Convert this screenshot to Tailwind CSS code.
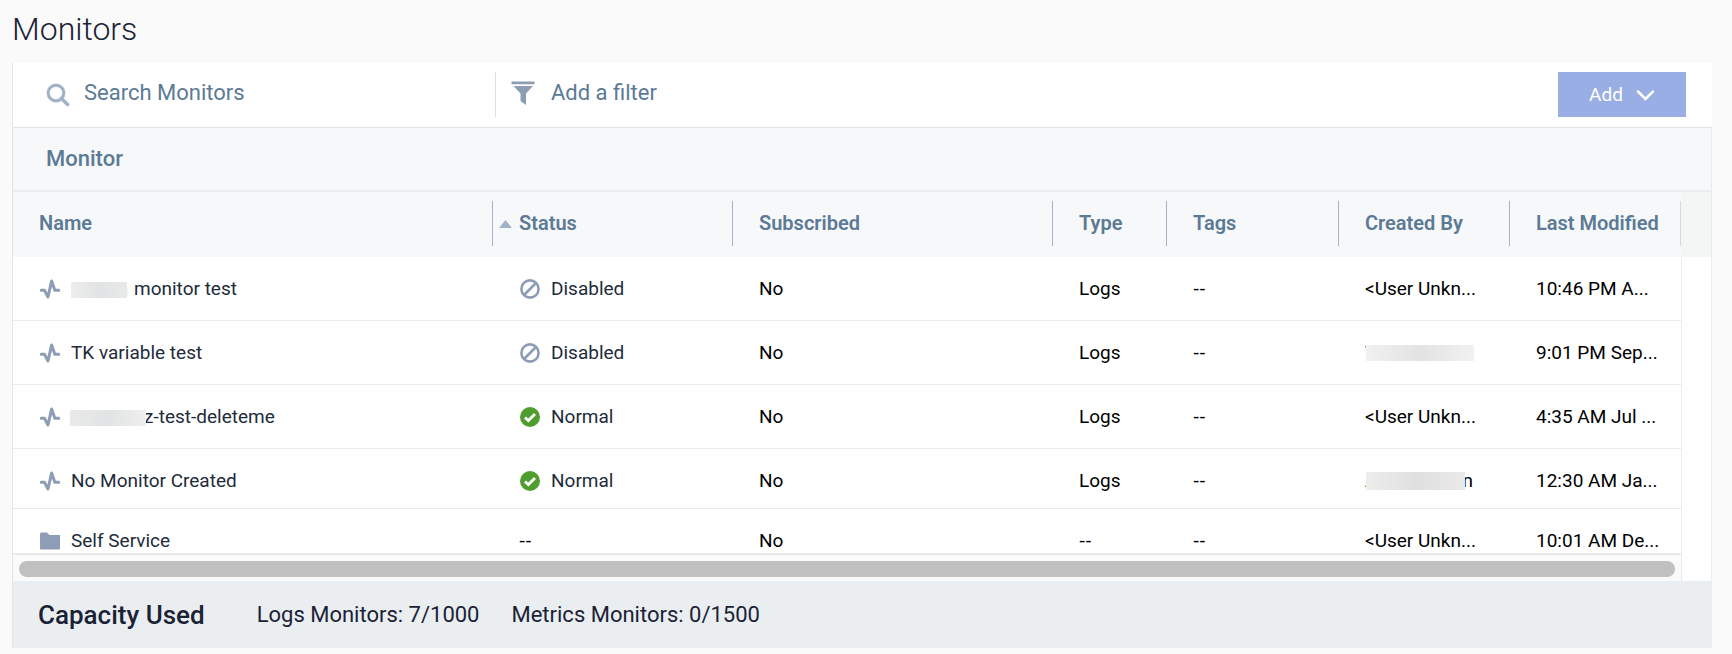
<!DOCTYPE html>
<html lang="en">
<head>
<meta charset="utf-8">
<meta name="viewport" content="width=device-width, initial-scale=1">
<title>Monitors</title>
<script src="https://cdn.jsdelivr.net/npm/@tailwindcss/browser@4"></script>
</head>
<body class="min-h-screen bg-[#fafafa] font-[Roboto,'Liberation_Sans',sans-serif] text-[19px] leading-[22px] text-[#222b3a]">
<svg class="hidden" aria-hidden="true">
  <symbol id="pulse" viewBox="0 0 20 20"><path d="M1.300 11.300H4.400L8 18L11.600 2L14.800 11.300H18.700" fill="none" stroke="#8c9db5" stroke-width="3" stroke-linejoin="round" stroke-linecap="round"/></symbol>
  <symbol id="disabled" viewBox="0 0 20 20"><circle cx="10" cy="10" r="8.600" fill="none" stroke="#8c9db5" stroke-width="2.600"/><path d="M4.500 15.500L15.500 4.500" stroke="#8c9db5" stroke-width="2.600"/></symbol>
  <symbol id="normal" viewBox="0 0 20 20"><circle cx="10" cy="10" r="10" fill="#4f9e2e"/><path d="M5 10.400L8.400 13.600L15 7" fill="none" stroke="#fff" stroke-width="2.800"/></symbol>
  <symbol id="folder" viewBox="0 0 20 20"><path d="M0 3Q0 1.500 1.500 1.500H7L9.500 4H20V17.500Q20 18.500 19 18.500H1Q0 18.500 0 17.500Z" fill="#8c9db5"/></symbol>
</svg>
<main class="pl-3 pr-5">
  <h1 class="h-[63px] pt-2 text-[32px] leading-[42px] font-light text-[#1b2235]">Monitors</h1>

  <section class="border-l border-[#e2e5e9]">
    <div class="flex h-[65px] items-center border-b border-[#dfe4e8] bg-white pr-[26px] pb-px text-[22px]">
      <label class="flex w-[482px] shrink-0 items-center gap-[14px] pl-[33px]">
        <svg class="size-6 shrink-0" viewBox="0 0 24 24" aria-hidden="true"><circle cx="10" cy="10" r="7.800" fill="none" stroke="#a2b3c8" stroke-width="3.200"/><path d="M15.500 15.500L21.500 21.500" stroke="#a2b3c8" stroke-width="3.600" stroke-linecap="round"/></svg>
        <input type="text" aria-label="Search Monitors" placeholder="Search Monitors" class="mb-1 w-full bg-transparent outline-none placeholder:text-[#5b7a95]">
      </label>
      <label class="flex h-[45px] grow items-center gap-4 border-l border-[#dcdfe8] pb-1 pl-[15px]">
        <svg class="size-6 shrink-0" viewBox="0 0 24 24" aria-hidden="true"><path d="M0.500 0.500H23.500V3.300H0.500ZM2.500 5H22L15 12.500V24L9.500 20V12.500Z" fill="#8c9db5"/></svg>
        <input type="text" aria-label="Add a filter" placeholder="Add a filter" class="w-full bg-transparent outline-none placeholder:text-[#5b7a95]">
      </label>
      <button type="button" class="flex h-[45px] w-32 shrink-0 items-center justify-center gap-3 bg-[#9aaee6] text-[19px] text-white">Add
        <svg class="size-5" viewBox="0 0 20 20" aria-hidden="true"><path d="M3 6.500L10.500 14L18 6.500" fill="none" stroke="#fff" stroke-width="2.500" stroke-linecap="round"/></svg>
      </button>
    </div>

    <div class="border-r border-[#eaecef]">
      <h2 class="h-16 border-b-2 border-[#eaecef] bg-[#f7f8fa] pl-[33px] text-[22px] leading-[62px] font-medium text-[#5b7a95]">Monitor</h2>

      <div class="flex bg-white">
        <div class="min-w-0 grow">
          <table class="w-full table-fixed border-separate border-spacing-0 text-left text-black">
            <colgroup><col><col class="w-[240px]"><col class="w-[320px]"><col class="w-[114px]"><col class="w-[172px]"><col class="w-[171px]"><col class="w-[171px]"></colgroup>
            <thead>
              <tr class="h-[65px] bg-[#f7f8fa] text-[20px] text-[#5b7a95] [&_th]:p-0 [&_th]:pt-[9px] [&_th]:align-top [&_th]:font-semibold [&_div]:h-[45px] [&_div]:border-r [&_div]:pl-[26px] [&_div]:leading-[45px]">
                <th scope="col"><div class="border-[#a2b3c8]">Name</div></th>
                <th scope="col" aria-sort="ascending"><div class="relative border-[#a2b3c8]"><svg class="absolute left-[6px] top-[19px] h-[8px] w-[13px]" viewBox="0 0 13 8" aria-hidden="true"><path d="M0 8L6.500 0L13 8Z" fill="#a2b3c8"/></svg>Status</div></th>
                <th scope="col"><div class="border-[#a2b3c8]">Subscribed</div></th>
                <th scope="col"><div class="border-[#a2b3c8]">Type</div></th>
                <th scope="col"><div class="border-[#a2b3c8]">Tags</div></th>
                <th scope="col"><div class="border-[#a2b3c8]">Created By</div></th>
                <th scope="col"><div class="border-[#d6dade]">Last Modified</div></th>
              </tr>
            </thead>
            <tbody class="[&_td]:truncate [&_td]:pt-[21px] [&_td]:pl-[26px] [&_td]:align-top [&_td]:border-[#e9ecef] [&_td]:border-b [&_tr:last-child_td]:border-b-0">
              <tr class="h-16">
                <td><div class="flex items-center gap-[11px] pl-px text-[#222b3a]"><svg class="size-5 shrink-0"><use href="#pulse"/></svg><span class="flex"><span class="relative mr-[6px] flex w-[57px] justify-between"><span>S</span><span>n</span><span class="absolute top-1 left-0 h-4 w-14 bg-linear-to-r from-[#ededed] via-[#e1e3e4] to-[#e9e9e9]"></span></span>monitor test</span></div></td>
                <td><div class="flex items-center gap-[11px] pl-px text-[#222b3a]"><svg class="size-5 shrink-0"><use href="#disabled"/></svg>Disabled</div></td>
                <td>No</td><td>Logs</td><td class="font-['Liberation_Sans']">--</td><td>&lt;User Unkn...</td><td>10:46 PM A...</td>
              </tr>
              <tr class="h-16">
                <td><div class="flex items-center gap-[11px] pl-px text-[#222b3a]"><svg class="size-5 shrink-0"><use href="#pulse"/></svg>TK variable test</div></td>
                <td><div class="flex items-center gap-[11px] pl-px text-[#222b3a]"><svg class="size-5 shrink-0"><use href="#disabled"/></svg>Disabled</div></td>
                <td>No</td><td>Logs</td><td class="font-['Liberation_Sans']">--</td>
                <td><div class="relative">T<span class="absolute top-[3px] left-px h-4 w-[108px] bg-linear-to-r from-[#f1f1f1] via-[#e3e3e3] to-[#f1f1f1]"></span></div></td>
                <td>9:01 PM Sep...</td>
              </tr>
              <tr class="h-16">
                <td><div class="flex items-center gap-[11px] pl-px text-[#222b3a]"><svg class="size-5 shrink-0"><use href="#pulse"/></svg><span class="relative pl-[73px]">z-test-deleteme<span class="absolute top-1 -left-px h-4 w-[76px] bg-linear-to-r from-[#eaeaea] via-[#e1e3e4] to-[#efefef]"></span></span></div></td>
                <td><div class="flex items-center gap-[11px] pl-px text-[#222b3a]"><svg class="size-5 shrink-0"><use href="#normal"/></svg>Normal</div></td>
                <td>No</td><td>Logs</td><td class="font-['Liberation_Sans']">--</td><td>&lt;User Unkn...</td><td>4:35 AM Jul ...</td>
              </tr>
              <tr class="h-[60px]">
                <td><div class="flex items-center gap-[11px] pl-px text-[#222b3a]"><svg class="size-5 shrink-0"><use href="#pulse"/></svg>No Monitor Created</div></td>
                <td><div class="flex items-center gap-[11px] pl-px text-[#222b3a]"><svg class="size-5 shrink-0"><use href="#normal"/></svg>Normal</div></td>
                <td>No</td><td>Logs</td><td class="font-['Liberation_Sans']">--</td>
                <td><div class="relative flex w-[108px] justify-between"><span>A</span><span>n</span><span class="absolute top-0.5 left-px h-[18px] w-[99px] bg-linear-to-r from-[#ededed] via-[#e0e0e0] to-[#e9e9e9]"></span></div></td>
                <td>12:30 AM Ja...</td>
              </tr>
              <tr class="h-11">
                <td><div class="flex items-center gap-[11px] pl-px text-[#222b3a]"><svg class="size-5 shrink-0"><use href="#folder"/></svg>Self Service</div></td>
                <td class="font-['Liberation_Sans']">--</td><td>No</td><td class="font-['Liberation_Sans']">--</td><td class="font-['Liberation_Sans']">--</td><td>&lt;User Unkn...</td><td>10:01 AM De...</td>
              </tr>
            </tbody>
          </table>
          <div class="h-7 border-t-2 border-[#e6e8e9] bg-[#fafafa] px-[6px] pt-[6px]"><div class="h-4 rounded-full bg-[#c0c0c0]"></div></div>
        </div>
        <div class="flex w-[30px] shrink-0 flex-col"><div class="h-[65px] bg-[#f4f5f5]"></div><div class="grow border-l border-[#eaecef]"></div></div>
      </div>
    </div>

    <footer class="flex h-[67px] items-center bg-[#eaeef1] pl-[25px] text-[22px] text-[#1b2235]">
      <strong class="mr-[52px] text-[26px] font-medium">Capacity Used</strong>
      <span class="mr-8">Logs Monitors: 7/1000</span>
      <span>Metrics Monitors: 0/1500</span>
    </footer>
  </section>
</main>
</body>
</html>
